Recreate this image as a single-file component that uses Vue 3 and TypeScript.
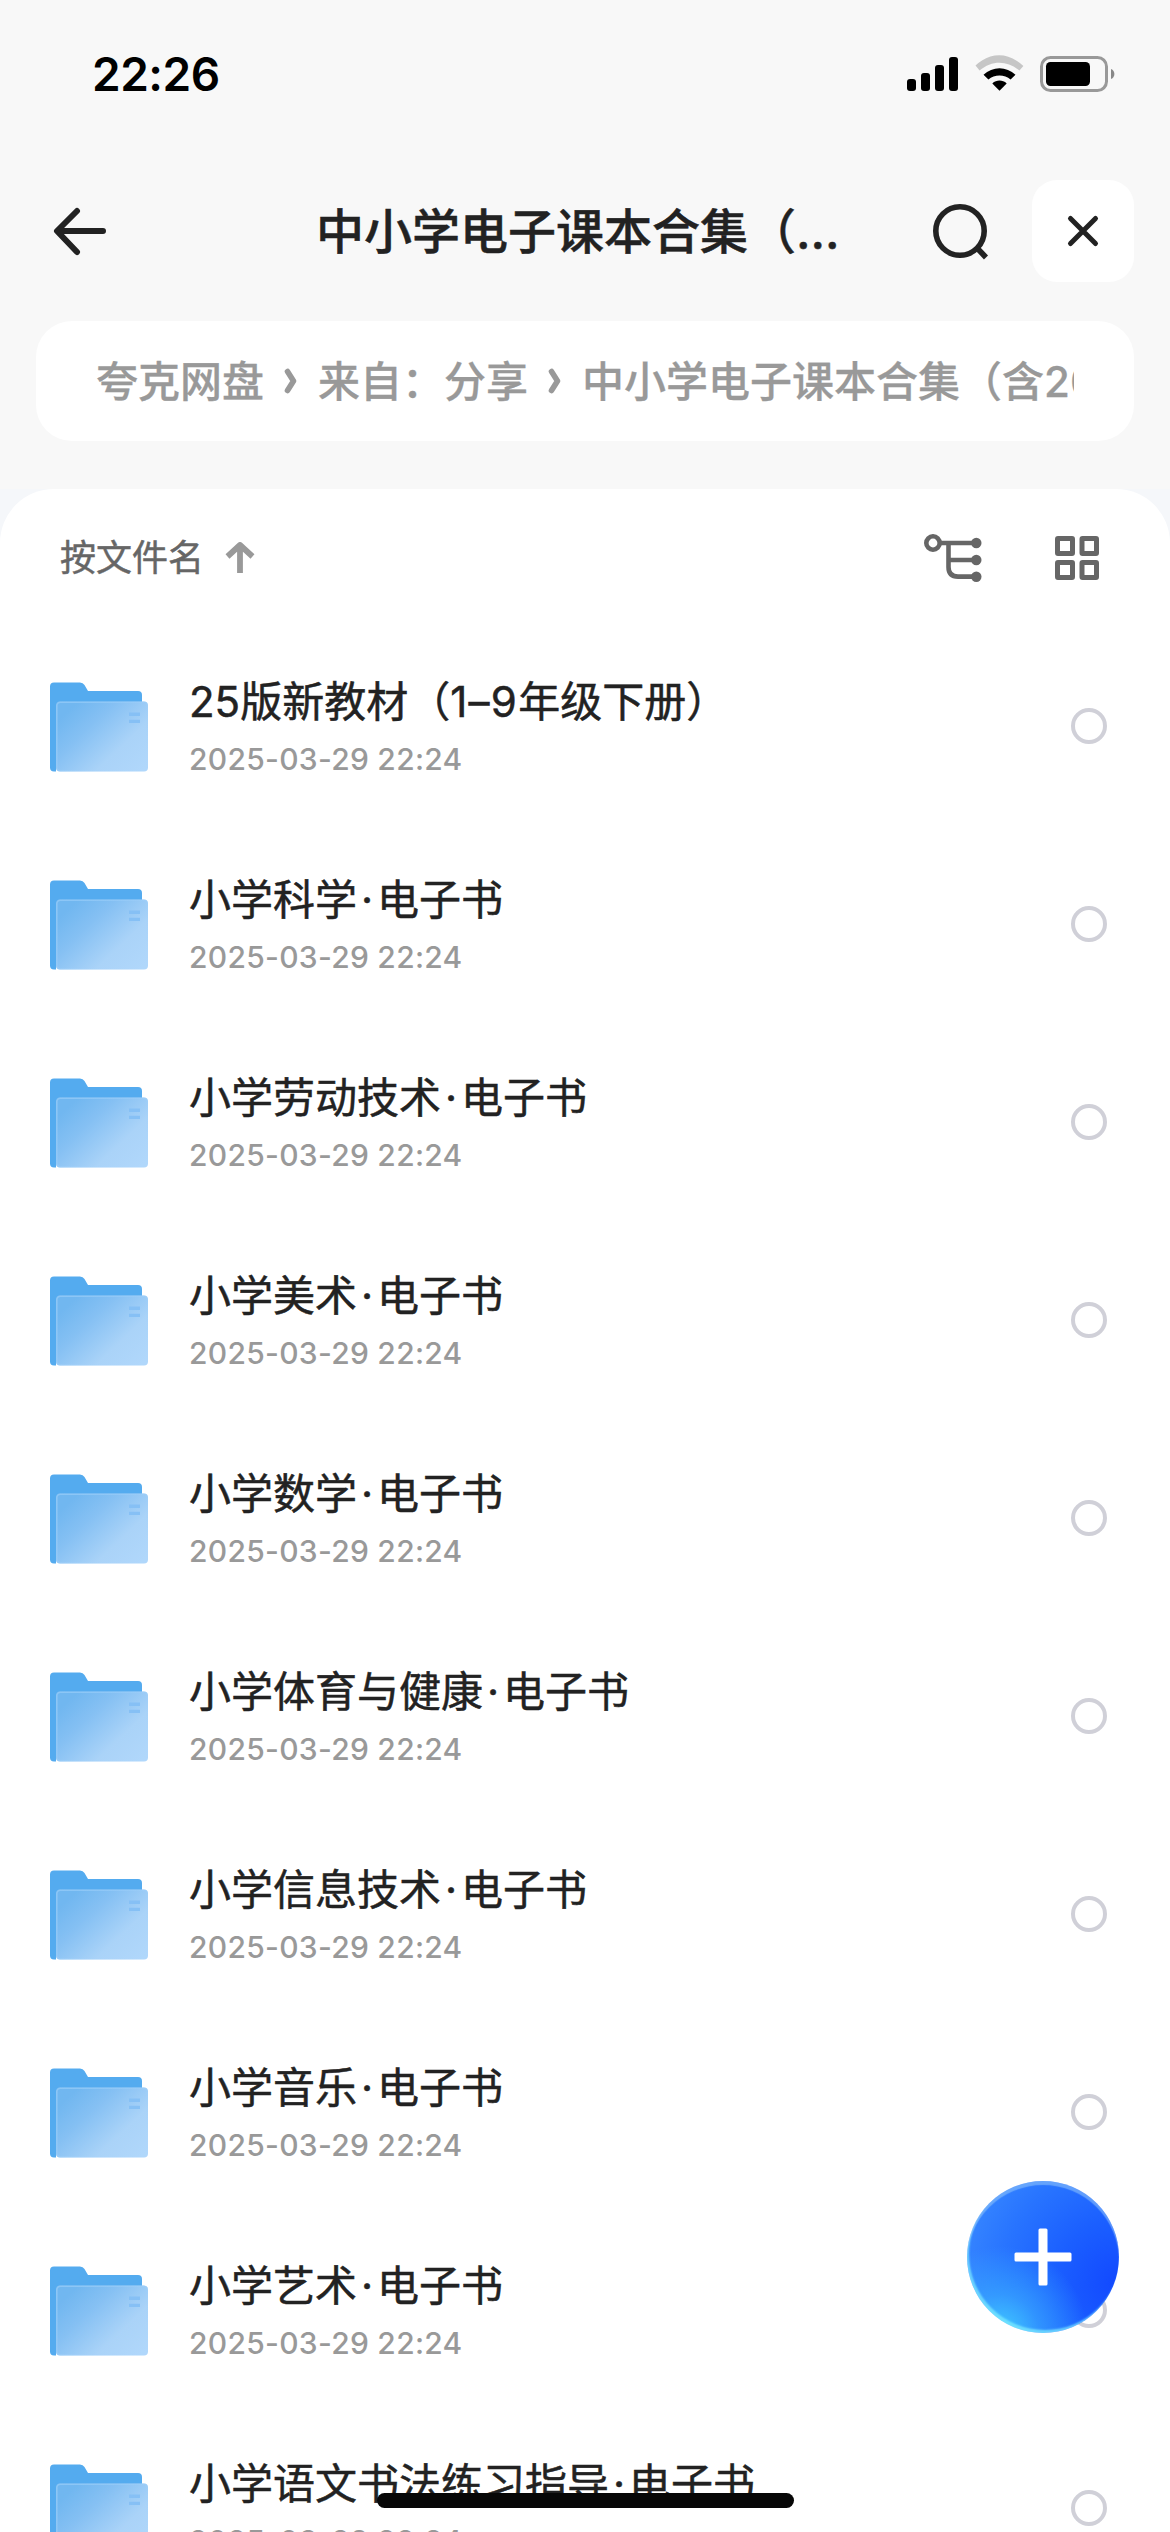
<script setup lang="ts">
interface FileRow {
  id: number
  before: string
  range?: string
  after: string
  date: string
}

const subjects = [
  '小学科学',
  '小学劳动技术',
  '小学美术',
  '小学数学',
  '小学体育与健康',
  '小学信息技术',
  '小学音乐',
  '小学艺术',
  '小学语文书法练习指导',
]
const date = '2025-03-29 22:24'

const rows: FileRow[] = [
  { id: 0, before: '25版新教材（', range: '1–9', after: '年级下册）', date },
  ...subjects.map((before, i) => ({ id: i + 1, before, after: '电子书', date })),
]

const crumbs = ['夸克网盘', '来自：分享', '中小学电子课本合集（含2025']
</script>

<template>
  <div class="screen" lang="zh-CN">
    <svg class="defs" width="0" height="0" aria-hidden="true">
      <defs>
        <linearGradient id="folderFront" x1="0" y1="0.1" x2="1" y2="0.9">
          <stop offset="0.1" stop-color="#71b7f0" />
          <stop offset="0.35" stop-color="#85c0f3" />
          <stop offset="0.7" stop-color="#aad3f8" />
          <stop offset="1" stop-color="#b0d7fb" />
        </linearGradient>
        <linearGradient id="folderEdge" x1="0" y1="0" x2="1" y2="1">
          <stop offset="0" stop-color="#8cc6f6" />
          <stop offset="1" stop-color="#b0d7fb" stop-opacity="0" />
        </linearGradient>
      </defs>
    </svg>

    <header class="status">
      <span class="clock">22:26</span>
      <svg class="status-icons" width="210" height="40" viewBox="0 0 210 40">
        <rect x="2" y="26" width="9" height="12" rx="3" />
        <rect x="16" y="20" width="9" height="18" rx="3" />
        <rect x="30" y="12" width="9" height="26" rx="3" />
        <rect x="44" y="4" width="9" height="34" rx="3" />
        <path d="M70.5 12.6 Q73.5 9.4 77 7.4 C88 0.4 101 0.4 112 8 Q115.500 10.200 118.400 12.900 L114.400 17.600 C102.500 7.200 86.500 7.200 74.600 17.600 Z" fill="#c6c6c6" />
        <path d="M78.500 21.700 C87.500 13 101.500 13 110.500 21.700 L105.600 26.500 C99.500 21.300 89.500 21.300 83.400 26.500 Z" />
        <path d="M87.300 30.400 C91.500 26.600 97.500 26.600 101.700 30.400 L94.500 37.800 Z" />
        <rect x="136.500" y="4.500" width="65" height="33" rx="9" fill="none" stroke="#999" stroke-width="3" />
        <rect x="141" y="9" width="44" height="24" rx="4.500" />
        <path d="M206 16 C210.500 17.500 210.500 24.500 206 26 Z" fill="#888" />
      </svg>
    </header>

    <nav class="bar">
      <svg class="back" width="60" height="60" viewBox="0 0 60 60">
        <path d="M29 10 L9 30 L29 51 M9.500 30 H55" fill="none" stroke="#222" stroke-width="6" stroke-linecap="round" stroke-linejoin="round" />
      </svg>
      <h1 class="heading">中小学电子课本合集（...</h1>
      <svg class="search" width="60" height="60" viewBox="0 0 60 60">
        <ellipse cx="30" cy="30" rx="24.200" ry="24.200" fill="none" stroke="#222" stroke-width="5.600" />
        <path d="M47.500 47.500 L56 56.500" stroke="#222" stroke-width="5.600" />
      </svg>
      <button class="close">
        <svg width="40" height="40" viewBox="0 0 40 40">
          <path d="M7.500 7.500 L32.500 32.500 M32.500 7.500 L7.500 32.500" stroke="#222" stroke-width="5" stroke-linecap="round" />
        </svg>
      </button>
    </nav>

    <div class="path">
      <div class="trail">
        <template v-for="(c, i) in crumbs" :key="c">
          <svg v-if="i" class="chev" width="14" height="26" viewBox="0 0 14 26">
            <path d="M3.500 3.500 L9.500 13 L3.500 22.500" fill="none" stroke="#999" stroke-width="5.600" stroke-linecap="round" stroke-linejoin="round" />
          </svg>
          <span>{{ c }}</span>
        </template>
      </div>
    </div>

    <div class="backing">
      <main class="panel">
        <div class="tools">
          <span class="sort">按文件名</span>
          <svg class="up" width="30" height="32" viewBox="0 0 30 32">
            <path d="M2.500 14.500 L15 3 L27.500 14.500 M15 4 V31" fill="none" stroke="#999" stroke-width="5.800" stroke-linejoin="round" />
          </svg>
          <svg class="tree" width="58" height="50" viewBox="0 0 58 50">
            <g fill="none" stroke="#666" stroke-width="4.600">
              <circle cx="9" cy="10" r="6.700" />
              <path d="M16 10 H52 M24.500 10 V34 Q24.500 43.600 34 43.600 H52 M24.500 27 H52" />
            </g>
            <g fill="#666">
              <circle cx="52.300" cy="10" r="5.200" />
              <circle cx="52.300" cy="27" r="5.200" />
              <circle cx="52.300" cy="43.800" r="5.200" />
            </g>
          </svg>
          <svg class="grid" width="44" height="44" viewBox="0 0 44 44" fill="none" stroke="#666" stroke-width="5">
            <rect x="2.500" y="2.500" width="15" height="15" rx="0.500" />
            <rect x="27" y="2.500" width="14.500" height="15" rx="0.500" />
            <rect x="2.500" y="26.500" width="15" height="15" rx="0.500" />
            <rect x="27" y="26.500" width="14.500" height="15" rx="0.500" />
          </svg>
        </div>

        <ul class="list">
          <li v-for="r in rows" :key="r.id" class="row">
            <svg class="folder" width="98" height="90" viewBox="0 0 98 90">
              <path d="M4 0.500 H30 Q33 0.500 34.500 3 L38 9 H88 Q92 9 92 13 V60 H6 V89.500 H4 Q0 89.500 0 85.500 V4.500 Q0 0.500 4 0.500 Z" fill="#54abef" />
              <rect x="6" y="19.500" width="92" height="70" rx="4" fill="url(#folderFront)" />
              <rect x="6.800" y="20.300" width="90.400" height="68.400" rx="3.500" fill="none" stroke="url(#folderEdge)" stroke-width="1.600" />
              <path d="M79 30.500 h11 v3.500 h-11 Z M79 37.800 h11 v3.200 h-11 Z" fill="#86c0f5" />
            </svg>
            <div class="info">
              <div class="name">{{ r.before }}<span v-if="r.range" class="range">{{ r.range }}</span><span v-else class="dot">·</span>{{ r.after }}</div>
              <div class="date">{{ r.date }}</div>
            </div>
            <span class="check"></span>
          </li>
        </ul>
      </main>
    </div>

    <button class="fab">
      <svg width="58" height="58" viewBox="0 0 58 58">
        <path d="M26 0.500 h6 q1.500 0 1.500 1.500 v22.500 h22.500 q1.500 0 1.500 1.500 v6 q0 1.500 -1.500 1.500 h-22.500 v22.500 q0 1.500 -1.500 1.500 h-6 q-1.500 0 -1.500 -1.500 v-22.500 h-22.500 q-1.500 0 -1.500 -1.500 v-6 q0 -1.500 1.500 -1.500 h22.500 v-22.500 q0 -1.500 1.500 -1.500 Z" fill="#fff" />
      </svg>
    </button>
    <div class="home"></div>
  </div>
</template>

<style>
body {
  margin: 0;
  background: #f8f8f8;
}
</style>

<style scoped>
.screen {
  position: relative;
  display: flex;
  flex-direction: column;
  width: 1170px;
  height: 2532px;
  overflow: hidden;
  background: #f8f8f8;
  color: #222;
  font-family: Inter, 'Noto Sans CJK SC', sans-serif;
}
svg {
  display: block;
  flex: none;
}
.defs {
  position: absolute;
}
button {
  border: 0;
  padding: 0;
  display: flex;
  align-items: center;
  justify-content: center;
}
.status {
  display: flex;
  justify-content: space-between;
  align-items: flex-start;
  box-sizing: border-box;
  height: 180px;
  padding: 53px 53px 0 92px;
  flex: none;
}
.status-icons {
  margin-right: 2px;
  overflow: visible;
}
.clock {
  font-size: 46px;
  line-height: 42px;
  font-weight: 600;
  letter-spacing: -0.5px;
  color: #000;
}
.bar {
  display: flex;
  align-items: center;
  height: 102px;
  padding: 0 36px 0 48px;
  flex: none;
}
.heading {
  flex: none;
  width: 614px;
  margin: 2px 0 0 208px;
  font-size: 48px;
  line-height: 60px;
  font-weight: 500;
  -webkit-text-stroke: 0.5px #222;
  white-space: nowrap;
}
.close {
  width: 102px;
  height: 102px;
  margin-left: 42px;
  border-radius: 25px;
  background: #fff;
}
.path {
  box-sizing: border-box;
  display: flex;
  align-items: center;
  height: 120px;
  margin: 39px 36px 48px;
  padding: 0 60px;
  border-radius: 36px;
  background: #fff;
  flex: none;
}
.trail {
  display: flex;
  align-items: center;
  flex: 1;
  min-width: 0;
  overflow: hidden;
  white-space: nowrap;
  font-size: 42px;
  line-height: 60px;
  font-weight: 500;
  color: #999;
  -webkit-text-stroke: 0.3px #999;
}
.trail span {
  flex: none;
  padding-top: 2px;
}
.chev {
  margin: 0 20px;
}
.backing {
  flex: 1;
  background: #f5f7fa;
  min-height: 0;
}
.panel {
  height: 100%;
  border-radius: 54px 54px 0 0;
  background: #fff;
}
.tools {
  display: flex;
  align-items: center;
  box-sizing: border-box;
  height: 138px;
  padding: 0 71px 0 60px;
}
.sort {
  font-size: 36px;
  line-height: 40px;
  color: #666;
  -webkit-text-stroke: 0.5px #666;
}
.up {
  margin-left: 21px;
}
.tree {
  margin-left: auto;
}
.grid {
  margin-left: 73px;
}
.list {
  margin: 0;
  padding: 0;
  list-style: none;
}
.row {
  display: flex;
  align-items: flex-start;
  box-sizing: border-box;
  height: 198px;
  padding: 55px 63px 0 50px;
}
.info {
  flex: 1;
  margin: -2px 0 0 41px;
}
.name {
  font-size: 42px;
  line-height: 44px;
  white-space: nowrap;
  -webkit-text-stroke: 0.5px #222;
}
.dot {
  display: inline-block;
  width: 20px;
  text-align: center;
}
.range {
  letter-spacing: 1.3px;
}
.date {
  margin-top: 17px;
  font-size: 30px;
  line-height: 36px;
  font-weight: 500;
  letter-spacing: 0.28px;
  color: #999;
}
.check {
  box-sizing: border-box;
  width: 36px;
  height: 36px;
  margin-top: 26px;
  border: 4px solid #d0d0d8;
  border-radius: 50%;
}
.fab {
  position: absolute;
  left: 967px;
  top: 2181px;
  width: 152px;
  height: 152px;
  border-radius: 50%;
  background:
    radial-gradient(circle at 22% 100%, rgba(66, 208, 255, 0.95) 0, rgba(58, 176, 255, 0.6) 20%, rgba(50, 140, 255, 0) 45%),
    radial-gradient(circle at 100% 68%, #1248ff 0, #1b5fff 35%, #2874ff 65%, #3d8eff 100%);
  box-shadow:
    inset 0 4px 1px rgba(150, 200, 250, 0.55),
    inset 2px -3px 2px rgba(130, 240, 255, 0.7);
}
.home {
  position: absolute;
  left: 377px;
  top: 2493px;
  width: 417px;
  height: 15px;
  border-radius: 8px;
  background: #070707;
}
</style>
